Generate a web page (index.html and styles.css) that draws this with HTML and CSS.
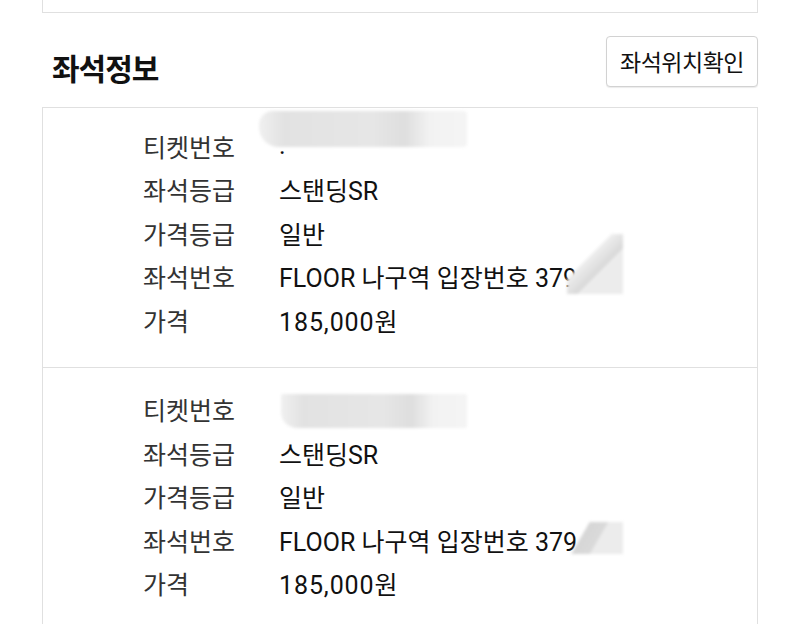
FILE: index.html
```html
<!DOCTYPE html>
<html lang="ko">
<head>
    <meta charset="UTF-8">
    <meta name="viewport" content="width=device-width, initial-scale=1.0">
    <title>좌석정보</title>
    <link rel="stylesheet" href="styles.css">
</head>
<body>
    <div class="page">
        <div class="prev-card"></div>

        <div class="section-head">
            <h2>좌석정보</h2>
            <button type="button" class="seat-btn">좌석위치확인</button>
        </div>

        <div class="seat-list">
            <div class="seat-item">
                <div class="row">
                    <span class="label">티켓번호</span>
                    <span class="value">.<span class="mask mask-ticket"></span></span>
                </div>
                <div class="row">
                    <span class="label">좌석등급</span>
                    <span class="value">스탠딩SR</span>
                </div>
                <div class="row">
                    <span class="label">가격등급</span>
                    <span class="value">일반</span>
                </div>
                <div class="row">
                    <span class="label">좌석번호</span>
                    <span class="value">FLOOR 나구역 입장번호 379<span class="mask mask-seat tall"></span></span>
                </div>
                <div class="row">
                    <span class="label">가격</span>
                    <span class="value price">185,000원</span>
                </div>
            </div>

            <div class="seat-item">
                <div class="row">
                    <span class="label">티켓번호</span>
                    <span class="value"><span class="mask mask-ticket second"></span></span>
                </div>
                <div class="row">
                    <span class="label">좌석등급</span>
                    <span class="value">스탠딩SR</span>
                </div>
                <div class="row">
                    <span class="label">가격등급</span>
                    <span class="value">일반</span>
                </div>
                <div class="row">
                    <span class="label">좌석번호</span>
                    <span class="value">FLOOR 나구역 입장번호 379<span class="mask mask-seat"></span></span>
                </div>
                <div class="row">
                    <span class="label">가격</span>
                    <span class="value price">185,000원</span>
                </div>
            </div>
        </div>
    </div>
</body>
</html>
```

FILE: styles.css
```css
body {
    margin: 0;
    padding: 0;
    background: #fff;
    font-family: Roboto, "Noto Sans CJK KR", sans-serif;
    color: #111;
}

.page {
    padding: 0 42px;
}

.prev-card {
    height: 12px;
    border: 1px solid #e0e0e0;
    border-top: none;
}

.section-head {
    display: flex;
    justify-content: space-between;
    align-items: center;
    padding: 20px 0 18px 10px;
}

.section-head h2 {
    margin: 12px 0 0;
    font-family: "Noto Sans CJK KR", sans-serif;
    font-size: 30px;
    font-weight: 700;
    letter-spacing: -1px;
    color: #111;
}

.seat-btn {
    width: 152px;
    height: 51px;
    padding: 0;
    background: #fff;
    border: 1px solid #d2d2d2;
    border-radius: 4px;
    font-family: inherit;
    font-size: 23px;
    letter-spacing: -0.5px;
    color: #111;
    box-shadow: 0 1px 1px rgba(0, 0, 0, 0.08);
}

.seat-list {
    border: 1px solid #e0e0e0;
    border-bottom: none;
}

.seat-item {
    padding: 20px 0 21px 100px;
}

.seat-item:first-child {
    padding-top: 16px;
    padding-bottom: 25px;
}

.seat-item + .seat-item {
    border-top: 1px solid #e0e0e0;
}

.row {
    display: flex;
    align-items: center;
    height: 43.5px;
    font-size: 25px;
}

.label {
    width: 136px;
    color: #333;
}

.value {
    position: relative;
    color: #111;
}

.price {
    letter-spacing: 0.9px;
}

.mask {
    position: absolute;
    display: block;
    background: #e4e4e4;
    filter: blur(1.5px);
}

.mask-ticket {
    left: -20px;
    top: -20px;
    width: 208px;
    height: 36px;
    border-radius: 14px 4px 4px 20px;
    background: linear-gradient(90deg, #f0f0f0 0%, #e2e2e2 12%, #e6e6e6 55%, #dedede 70%, #f2f2f2 82%, #f4f4f4 100%);
}

.mask-ticket.second {
    left: 2px;
    top: -15px;
    width: 186px;
    height: 34px;
    border-radius: 2px 2px 2px 16px;
}

.mask-seat {
    right: -46px;
    top: 0;
    width: 56px;
    height: 32px;
    background: linear-gradient(120deg, rgba(255,255,255,0) 30%, #d6d6d6 31%, #dadada 55%, #ececec 56%);
}

.mask-seat.tall {
    top: -24px;
    height: 60px;
    background: linear-gradient(135deg, rgba(255,255,255,0) 38%, #eeeeee 39%, #d8d8d8 60%, #ececec 61%);
}
```
